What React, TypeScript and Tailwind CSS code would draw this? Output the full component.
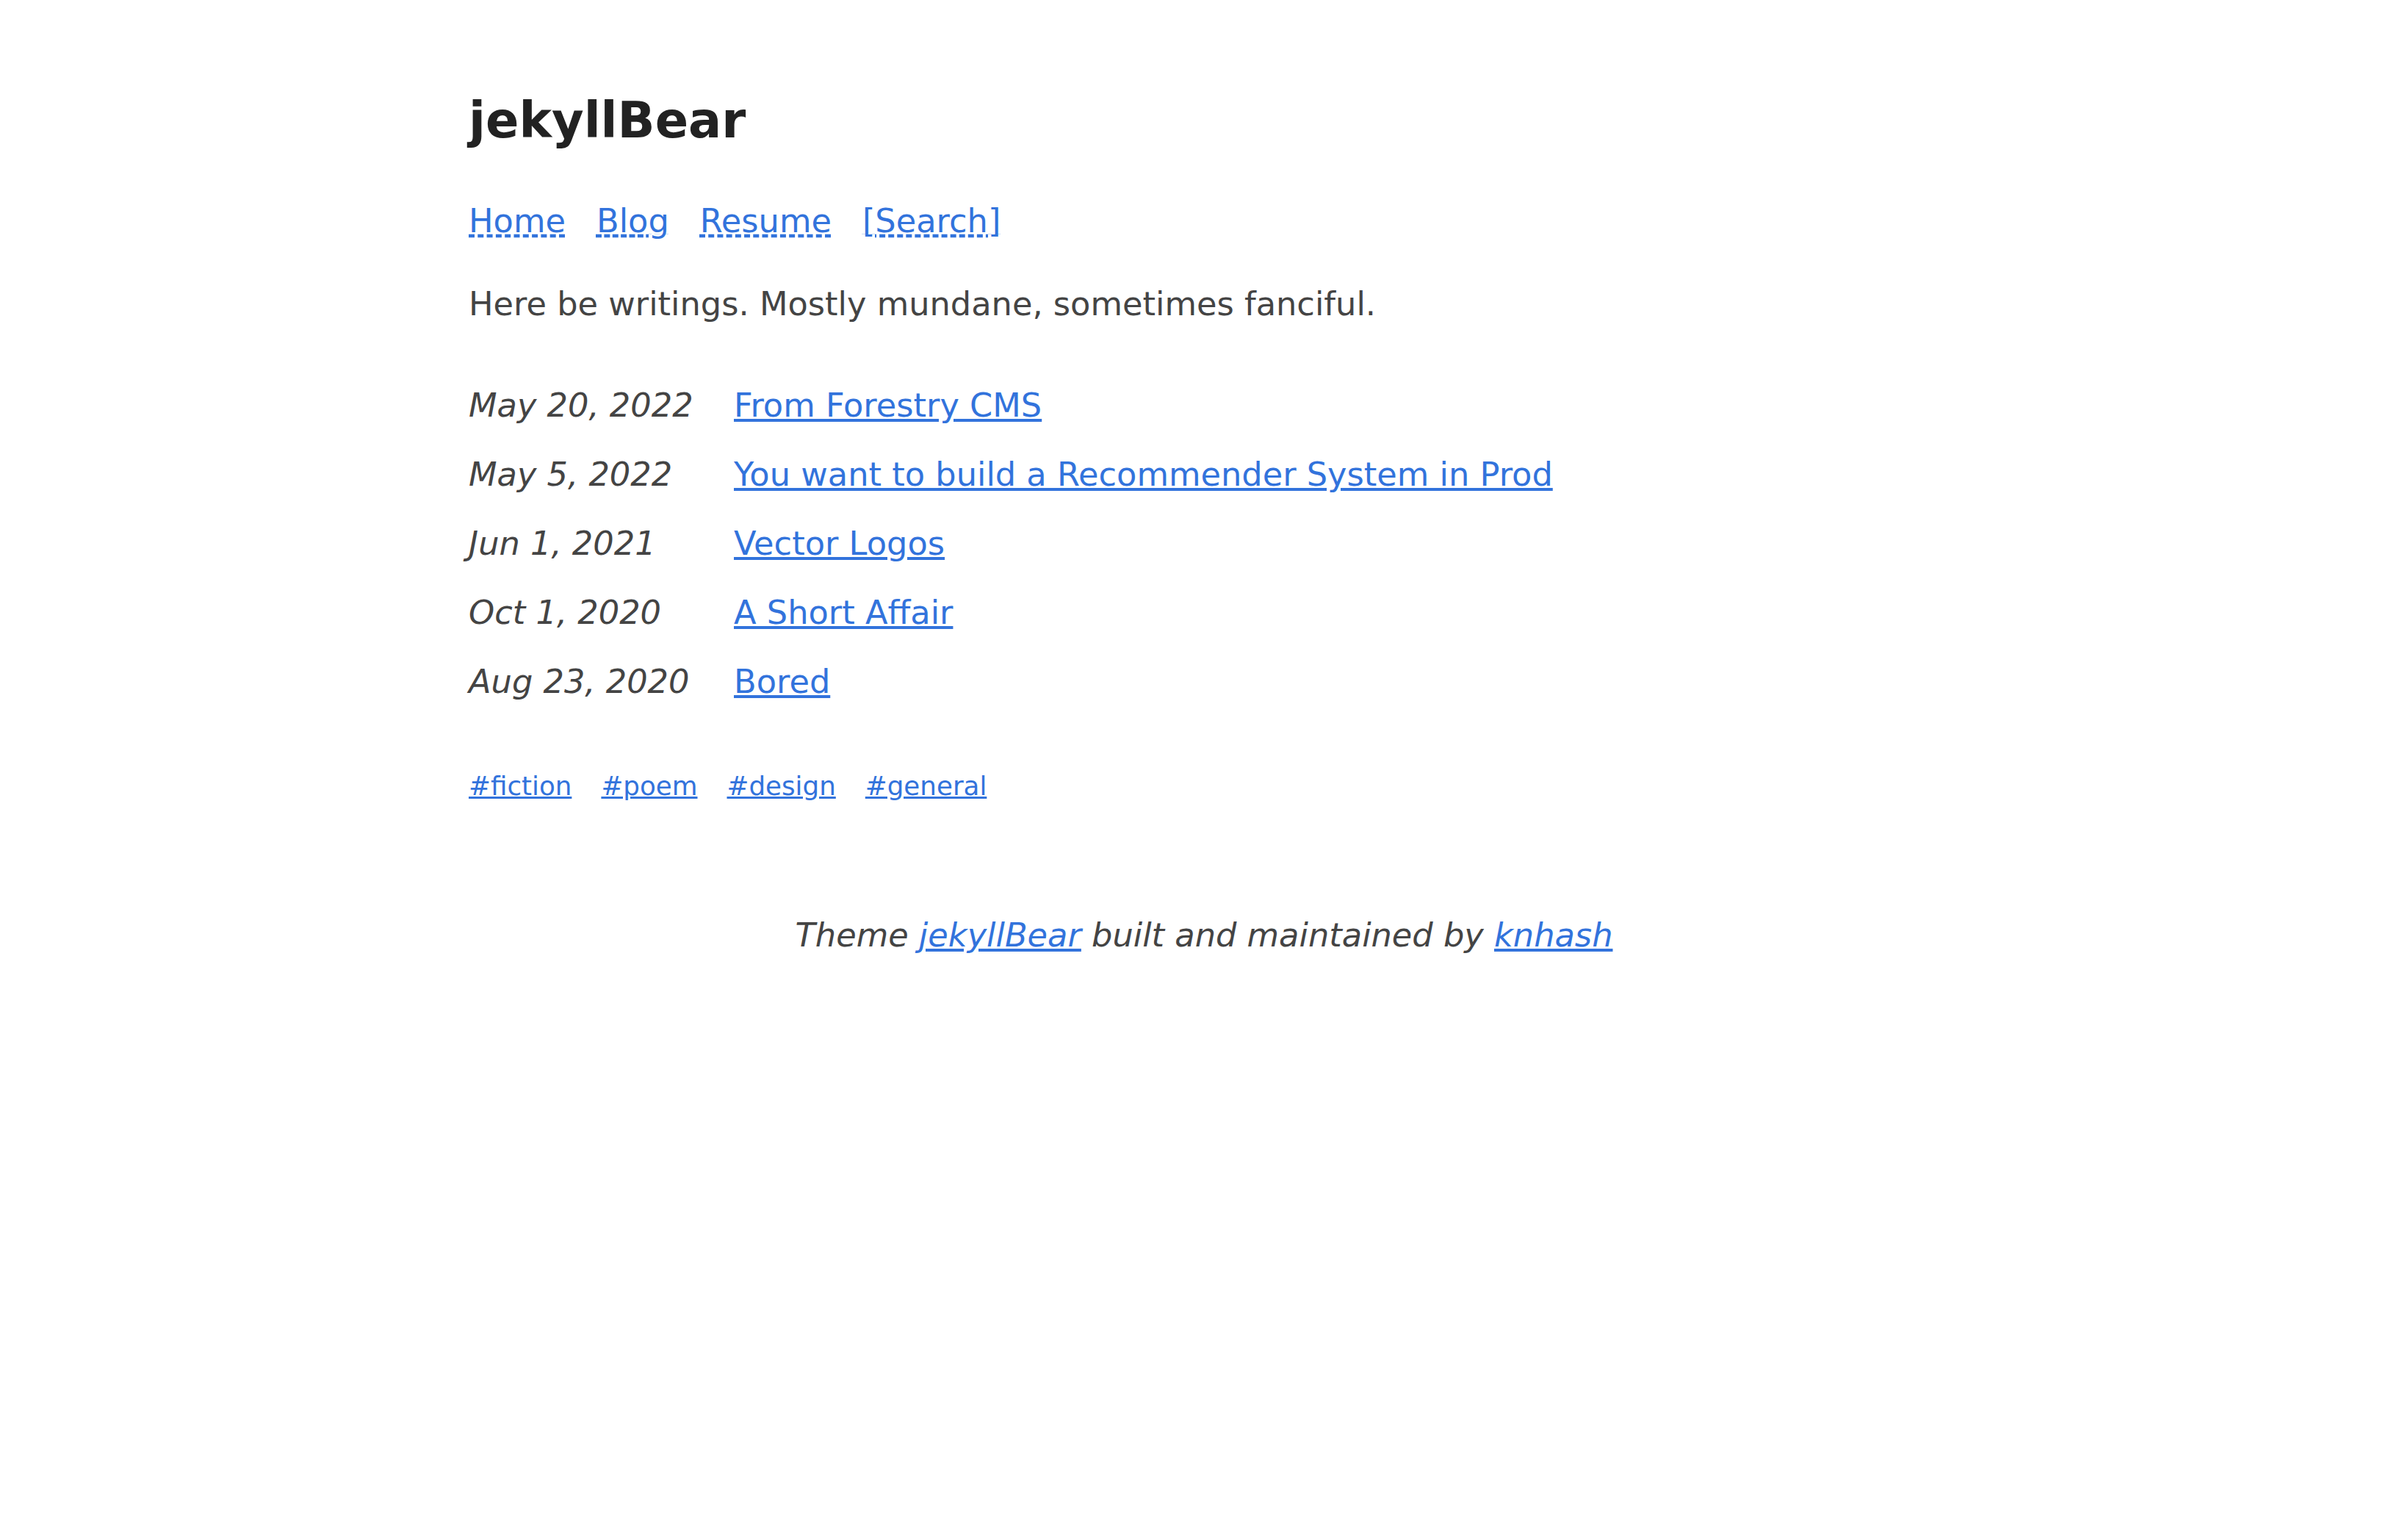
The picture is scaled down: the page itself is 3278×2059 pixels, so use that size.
import React from 'react'

const posts = [
    { date: "May 20, 2022", title: "From Forestry CMS" },
    { date: "May 5, 2022", title: "You want to build a Recommender System in Prod" },
    { date: "Jun 1, 2021", title: "Vector Logos" },
    { date: "Oct 1, 2020", title: "A Short Affair" },
    { date: "Aug 23, 2020", title: "Bored" },
]

const tags = ["#fiction", "#poem", "#design", "#general"]

export default function App() {
    return (
        <div className="min-h-screen w-full bg-white text-[#444] font-['DejaVu_Sans',Verdana,sans-serif] text-[44.7px] leading-[1.5]">
            <div className="w-[2002px] mx-auto pt-[124px] pb-[200px]">
                <header>
                    <a href="#" className="block text-[#222] font-bold text-[67px] leading-[80px] no-underline">jekyllBear</a>
                    <nav className="flex gap-[42px] mt-[64px]">
                        <a href="#" className="text-[#3273dc] underline decoration-dashed">Home</a>
                        <a href="#" className="text-[#3273dc] underline decoration-dashed">Blog</a>
                        <a href="#" className="text-[#3273dc] underline decoration-dashed">Resume</a>
                        <a href="#" className="text-[#3273dc] underline decoration-dashed">[Search]</a>
                    </nav>
                </header>

                <main>
                    <p className="mt-[46px]">Here be writings. Mostly mundane, sometimes fanciful.</p>

                    <ul className="mt-[71px] flex flex-col gap-[27px]">
                        {posts.map((post) => (
                            <li key={post.title} className="flex">
                                <span className="w-[361px] shrink-0 italic">{post.date}</span>
                                <a href="#" className="text-[#3273dc] underline">{post.title}</a>
                            </li>
                        ))}
                    </ul>

                    <div className="mt-[81px] flex gap-[40px] text-[35.7px]">
                        {tags.map((tag) => (
                            <a key={tag} href="#" className="text-[#3273dc] underline">{tag}</a>
                        ))}
                    </div>
                </main>

                <footer className="mt-[143px] text-center italic">
                    Theme <a href="#" className="text-[#3273dc] underline">jekyllBear</a> built and maintained by <a href="#" className="text-[#3273dc] underline">knhash</a>
                </footer>
            </div>
        </div>
    )
}
